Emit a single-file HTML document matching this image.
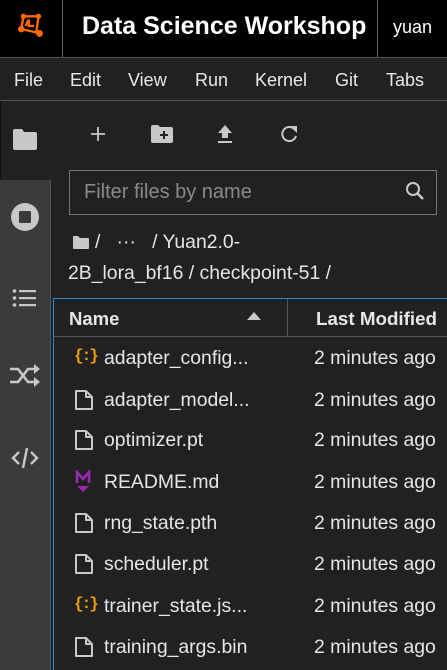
<!DOCTYPE html>
<html><head><meta charset="utf-8"><style>
*{margin:0;padding:0;box-sizing:border-box}
body{width:447px;height:670px;overflow:hidden;background:#212121;font-family:"Liberation Sans",sans-serif;color:#e6e6e6;position:relative}
.abs{position:absolute}
.top{left:0;top:0;width:447px;height:58px;background:#000;border-bottom:1px solid #555}
.vd{top:0;width:1px;height:57px;background:#666}
.menu{top:58px;left:0;width:447px;height:43px;border-bottom:1px solid #555;font-size:18px;color:#e8e8e8}
.menu span{position:absolute;top:12px}
.side{left:0;top:180px;width:51px;height:490px;background:#3b3b3b;border-right:1px solid #555}
.t{font-size:19.4px;white-space:nowrap}
.row .n{position:absolute;left:104px}
.row .d{position:absolute;left:314px}
</style></head><body>
<div class="abs top">
  <svg class="abs" style="left:17px;top:13px" width="30" height="28" viewBox="0 0 28 26"><g stroke="#ff6a00" stroke-width="2.2" fill="none"><path d="M6 3 L20 3 L18 18 L4 15 Z"/><path d="M8 12 L11 6 M11 6 L11 12 L16 12"/><path d="M18 18 L22 21"/></g><g fill="#ff6a00"><circle cx="6" cy="3" r="2.5"/><circle cx="20" cy="3" r="2.5"/><circle cx="4" cy="15" r="3"/><circle cx="21" cy="19" r="3.2"/></g></svg>
  <div class="abs vd" style="left:62px"></div>
  <div class="abs" style="left:82px;top:12px;font-size:25px;font-weight:bold;color:#fff">Data Science Workshop</div>
  <div class="abs vd" style="left:377px"></div>
  <div class="abs" style="left:393px;top:17px;font-size:18px;color:#fff">yuan</div>
</div>
<div class="abs menu"><span style="left:14px">File</span><span style="left:70px">Edit</span><span style="left:128px">View</span><span style="left:195px">Run</span><span style="left:255px">Kernel</span><span style="left:335px">Git</span><span style="left:386px">Tabs</span></div>
<div class="abs" style="left:0;top:101px;width:1px;height:569px;background:#111"></div>
<svg class="abs" style="left:12px;top:127px" width="26" height="24" viewBox="0 0 26 24"><path d="M1 4 Q1 2 3 2 L10 2 L12 5 L23 5 Q25 5 25 7 L25 21 Q25 23 23 23 L3 23 Q1 23 1 21 Z" fill="#c8c8c8"/></svg>
<div class="abs side"></div>
<svg class="abs" style="left:10px;top:202px" width="30" height="30" viewBox="0 0 30 30"><circle cx="15" cy="15" r="14" fill="#c8c8c8"/><rect x="9" y="9" width="12" height="12" rx="1" fill="#3b3b3b"/></svg>
<svg class="abs" style="left:12px;top:288px" width="26" height="20" viewBox="0 0 26 20"><g fill="#c8c8c8"><circle cx="2.5" cy="3" r="1.8"/><circle cx="2.5" cy="10" r="1.8"/><circle cx="2.5" cy="17" r="1.8"/><rect x="7" y="2" width="17" height="2.2"/><rect x="7" y="9" width="17" height="2.2"/><rect x="7" y="16" width="17" height="2.2"/></g></svg>
<svg class="abs" style="left:9px;top:364px" width="32" height="24" viewBox="0 0 32 24"><g stroke="#c8c8c8" stroke-width="2.6" fill="none"><path d="M1 5 L9 5 L19 18 L26 18"/><path d="M1 18 L9 18 L19 5 L26 5"/></g><g fill="#c8c8c8"><path d="M25 0 L31 5 L25 10 Z"/><path d="M25 13 L31 18 L25 23 Z"/></g></svg>
<svg class="abs" style="left:10px;top:445px" width="30" height="26" viewBox="0 0 30 26"><g stroke="#c8c8c8" stroke-width="2.4" fill="none"><path d="M9 7 L3 13 L9 19"/><path d="M21 7 L27 13 L21 19"/><path d="M17 3 L13 23"/></g></svg>
<svg class="abs" style="left:90px;top:126px" width="16" height="16" viewBox="0 0 16 16"><path d="M8 1V15M1 8H15" stroke="#c8c8c8" stroke-width="1.8"/></svg>
<svg class="abs" style="left:151px;top:125px" width="22" height="18" viewBox="0 0 22 18"><path d="M0 2 Q0 0 2 0 L7 0 L9 2 L20 2 Q22 2 22 4 L22 16 Q22 18 20 18 L2 18 Q0 18 0 16Z" fill="#c8c8c8"/><path d="M13 6V14M9 10H17" stroke="#212121" stroke-width="2"/></svg>
<svg class="abs" style="left:217px;top:124px" width="16" height="20" viewBox="0 0 16 20"><path d="M8 1 L15 9 L11 9 L11 14 L5 14 L5 9 L1 9 Z" fill="#c8c8c8"/><rect x="1" y="17" width="14" height="2" fill="#c8c8c8"/></svg>
<svg class="abs" style="left:279px;top:124px" width="20" height="20" viewBox="0 0 20 20"><path d="M16 6 A7 7 0 1 0 17 12" stroke="#c8c8c8" stroke-width="2" fill="none"/><path d="M11 2 L18 2 L18 9 Z" fill="#c8c8c8"/></svg>
<div class="abs" style="left:69px;top:170px;width:368px;height:45px;border:1px solid #777"></div>
<div class="abs t" style="left:84px;top:181px;color:#8a8a8a;font-size:20px">Filter files by name</div>
<svg class="abs" style="left:405px;top:181px" width="20" height="20" viewBox="0 0 20 20"><circle cx="8" cy="8" r="6" stroke="#c8c8c8" stroke-width="2" fill="none"/><path d="M12.5 12.5 L18 18" stroke="#c8c8c8" stroke-width="2.4"/></svg>
<svg class="abs" style="left:73px;top:236px" width="16" height="13" viewBox="0 0 16 13"><path d="M0 1 Q0 0 1 0 L5 0 L7 2 L15 2 Q16 2 16 3 L16 12 Q16 13 15 13 L1 13 Q0 13 0 12Z" fill="#c8c8c8"/></svg>
<div class="abs t" style="left:95px;top:231px">/ &nbsp;&nbsp;··· &nbsp;&nbsp;/ Yuan2.0-</div>
<div class="abs t" style="left:68px;top:262px">2B_lora_bf16 / checkpoint-51 /</div>
<div class="abs" style="left:53px;top:298px;width:394px;height:372px;border-left:1px solid #2c86d0;border-top:1px solid #2c86d0"></div>
<div class="abs" style="left:54px;top:336px;width:393px;height:1px;background:#555"></div>
<div class="abs" style="left:287px;top:299px;width:1px;height:37px;background:#555"></div>
<div class="abs t" style="left:69px;top:308px;font-weight:bold;font-size:18.5px">Name</div>
<svg class="abs" style="left:247px;top:312px" width="14" height="8"><path d="M0 8 L7 0 L14 8Z" fill="#c8c8c8"/></svg>
<div class="abs t" style="left:316px;top:308px;font-weight:bold;font-size:18.8px">Last Modified</div>
<div class="row">
<div class="abs t n" style="top:347px">adapter_config...</div><div class="abs t d" style="top:347px">2 minutes ago</div>
<div class="abs t n" style="top:389px">adapter_model...</div><div class="abs t d" style="top:389px">2 minutes ago</div>
<div class="abs t n" style="top:429px">optimizer.pt</div><div class="abs t d" style="top:429px">2 minutes ago</div>
<div class="abs t n" style="top:471px">README.md</div><div class="abs t d" style="top:471px">2 minutes ago</div>
<div class="abs t n" style="top:512px">rng_state.pth</div><div class="abs t d" style="top:512px">2 minutes ago</div>
<div class="abs t n" style="top:553px">scheduler.pt</div><div class="abs t d" style="top:553px">2 minutes ago</div>
<div class="abs t n" style="top:595px">trainer_state.js...</div><div class="abs t d" style="top:595px">2 minutes ago</div>
<div class="abs t n" style="top:636px">training_args.bin</div><div class="abs t d" style="top:636px">2 minutes ago</div>
</div>
<div class="abs" style="left:74px;top:347px;color:#f5a000;font-weight:bold;font-size:16px;font-family:'Liberation Mono',monospace;letter-spacing:-2px">{:}</div>
<div class="abs" style="left:74px;top:595px;color:#f5a000;font-weight:bold;font-size:16px;font-family:'Liberation Mono',monospace;letter-spacing:-2px">{:}</div>
<svg class="abs" style="left:74px;top:389px" width="20" height="22" viewBox="0 0 20 22"><path d="M2 2 L12 2 L18 8 L18 20 L2 20 Z M12 2 L12 8 L18 8" stroke="#c8c8c8" stroke-width="2" fill="none" stroke-linejoin="round"/></svg>
<svg class="abs" style="left:74px;top:429px" width="20" height="22" viewBox="0 0 20 22"><path d="M2 2 L12 2 L18 8 L18 20 L2 20 Z M12 2 L12 8 L18 8" stroke="#c8c8c8" stroke-width="2" fill="none" stroke-linejoin="round"/></svg>
<svg class="abs" style="left:74px;top:512px" width="20" height="22" viewBox="0 0 20 22"><path d="M2 2 L12 2 L18 8 L18 20 L2 20 Z M12 2 L12 8 L18 8" stroke="#c8c8c8" stroke-width="2" fill="none" stroke-linejoin="round"/></svg>
<svg class="abs" style="left:74px;top:553px" width="20" height="22" viewBox="0 0 20 22"><path d="M2 2 L12 2 L18 8 L18 20 L2 20 Z M12 2 L12 8 L18 8" stroke="#c8c8c8" stroke-width="2" fill="none" stroke-linejoin="round"/></svg>
<svg class="abs" style="left:74px;top:636px" width="20" height="22" viewBox="0 0 20 22"><path d="M2 2 L12 2 L18 8 L18 20 L2 20 Z M12 2 L12 8 L18 8" stroke="#c8c8c8" stroke-width="2" fill="none" stroke-linejoin="round"/></svg>
<svg class="abs" style="left:75px;top:470px" width="16" height="24" viewBox="0 0 16 24"><path d="M2 13 L2 2 L8 9 L14 2 L14 13" stroke="#9c27b0" stroke-width="2.6" fill="none"/><path d="M2 16 L14 16 L8 22Z" fill="#9c27b0"/></svg>
</body></html>
